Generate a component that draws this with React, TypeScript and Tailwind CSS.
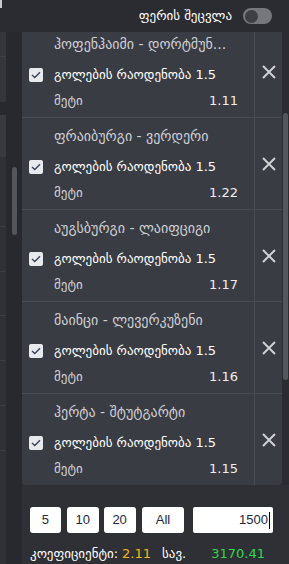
import React from "react";

type Bet = { match: string; odd: string };

const bets: Bet[] = [
  { match: "ჰოფენჰაიმი - დორტმუნ...", odd: "1.11" },
  { match: "ფრაიბურგი - ვერდერი", odd: "1.22" },
  { match: "აუგსბურგი - ლაიფციგი", odd: "1.17" },
  { match: "მაინცი - ლევერკუზენი", odd: "1.16" },
  { match: "ჰერტა - შტუტგარტი", odd: "1.15" },
];

const CheckBox = () => (
  <div className="w-[14px] h-[14px] rounded-[2px] bg-[#e9eaee] flex items-center justify-center shrink-0">
    <svg width="10" height="8" viewBox="0 0 10 8" fill="none">
      <path d="M1 4 L3.8 6.6 L9 1.2" stroke="#3b4560" strokeWidth="1.4" />
    </svg>
  </div>
);

const CloseIcon = () => (
  <svg width="14" height="14" viewBox="0 0 14 14" fill="none">
    <path d="M1 1 L13 13 M13 1 L1 13" stroke="#cfd0d4" strokeWidth="2" />
  </svg>
);

const BetRow = ({ bet }: { bet: Bet }) => {
  return (
    <div className="flex h-[92px] border-b border-[#4a4c54] shrink-0">
      <div className="flex-1 min-w-0 pl-[7px] pr-[16px] pt-[8px]">
        <div className="h-[20px] pl-[25px] text-[14px] leading-[20px] text-[#cfd0d5] uppercase truncate">
          {bet.match}
        </div>
        <div className="mt-[10px] h-[22px] flex items-center gap-[11px]">
          <CheckBox />
          <span className="text-[13px] text-white">გოლების რაოდენობა 1.5</span>
        </div>
        <div className="mt-[5px] h-[20px] pl-[25px] flex items-center justify-between text-[13px]">
          <span className="text-[#d2d3d7]">მეტი</span>
          <span className="text-[#eeeef0]">{bet.odd}</span>
        </div>
      </div>
      <div className="w-[28px] border-l border-[#4a4c54] flex items-center justify-center">
        <CloseIcon />
      </div>
    </div>
  );
};

export default function App() {
  return (
    <div className="w-[289px] h-[564px] bg-[#2e3036] flex flex-col overflow-hidden font-['DejaVu_Sans',sans-serif]">
      {/* header */}
      <div className="h-[32px] shrink-0 bg-[#2a2c31] flex items-center justify-end pr-[17px] relative z-10">
        <div className="absolute left-0 top-0 w-[2px] h-[8px] bg-[#c8c9cc]" />
        <span className="text-[13px] text-white mr-[11px]">ფერის შეცვლა</span>
        <div className="w-[29px] h-[16px] rounded-full bg-[#75777d] flex items-center px-[2px]">
          <div className="w-[13px] h-[13px] rounded-full bg-[#3d3f45]" />
        </div>
      </div>

      <div className="flex-1 flex min-h-0">
        {/* left column */}
        <div className="w-[22px] shrink-0 flex bg-[#27292e]">
          <div className="w-[6px] flex flex-col">
            <div className="h-[25px] bg-[#34363c] border-b border-[#3e4046]" />
            <div className="h-[45px] bg-[#34363c]" />
            <div className="h-[13px]" />
            <div className="h-[42px] bg-[#383a40]" />
            <div className="h-[70px] bg-[#2f3136] border-b border-[#3a3c42]" />
            <div className="h-[45px] bg-[#2f3136] border-b border-[#3a3c42]" />
            <div className="h-[44px] bg-[#2f3136] border-b border-[#3a3c42]" />
            <div className="h-[45px] bg-[#2f3136] border-b border-[#3a3c42]" />
            <div className="h-[45px] bg-[#2f3136] border-b border-[#3a3c42]" />
            <div className="h-[45px] bg-[#2f3136] border-b border-[#3a3c42]" />
            <div className="flex-1 bg-[#2f3136]" />
          </div>
          <div className="flex-1 pt-[135px] flex justify-center">
            <div className="w-[5px] h-[68px] rounded-full bg-[#54565d]" />
          </div>
        </div>

        {/* main */}
        <div className="flex-1 flex flex-col min-w-0">
          <div className="h-[453px] shrink-0 flex">
            <div className="flex-1 min-w-0 bg-[#3a3c44] rounded-b-[4px] overflow-hidden flex flex-col">
              <div className="-mt-[6px] flex flex-col">
                {bets.map((b, i) => (
                  <BetRow key={i} bet={b} />
                ))}
              </div>
            </div>
            <div className="w-[7px] shrink-0 bg-[#2a2c30] pt-[81px]">
              <div className="ml-[1px] w-[5px] h-[267px] rounded-full bg-[#55575e]" />
            </div>
          </div>

          {/* footer */}
          <div className="flex-1 pl-[8px] pr-[16px]">
            <div className="mt-[22px] flex items-center text-[13px] text-[#1b2742] font-['Liberation_Sans',sans-serif]">
              <div className="w-[31px] h-[26px] bg-white rounded-[3px] flex items-center justify-center">5</div>
              <div className="ml-[6px] w-[32px] h-[26px] bg-white rounded-[3px] flex items-center justify-center">10</div>
              <div className="ml-[5px] w-[32px] h-[26px] bg-white rounded-[3px] flex items-center justify-center">20</div>
              <div className="ml-[6px] w-[43px] h-[26px] bg-white rounded-[3px] flex items-center justify-center">All</div>
              <div className="ml-[9px] w-[80px] h-[26px] bg-white rounded-[2px] flex items-center justify-end pr-[3px]">
                1500<span className="w-[1px] h-[17px] bg-black ml-[1px]" />
              </div>
            </div>
            <div className="mt-[13px] flex items-center text-[13px] leading-[16px]">
              <span className="text-white uppercase">კოეფიციენტი:</span>
              <span className="ml-[4px] text-[#f2b90c]">2.11</span>
              <span className="ml-[11px] text-white">სავ.</span>
              <span className="ml-auto text-[#2fd84a] pr-[8px]">3170.41</span>
            </div>
          </div>
        </div>
      </div>
    </div>
  );
}
